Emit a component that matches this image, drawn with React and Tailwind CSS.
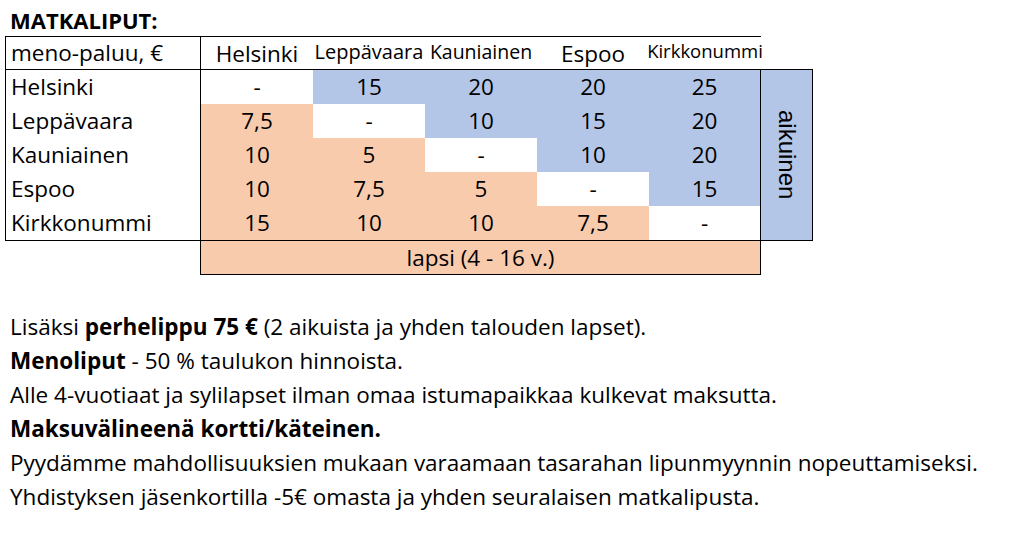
import React from 'react';

const cities = ['Helsinki', 'Leppävaara', 'Kauniainen', 'Espoo', 'Kirkkonummi'];

const prices = [
  ['-', '15', '20', '20', '25'],
  ['7,5', '-', '10', '15', '20'],
  ['10', '5', '-', '10', '20'],
  ['10', '7,5', '5', '-', '15'],
  ['15', '10', '10', '7,5', '-'],
];

const cellColor = (row, col) => {
  if (row === col) return 'bg-white';
  if (col > row) return 'bg-[#b4c6e7]';
  return 'bg-[#f8cbad]';
};

const App = () => {
  return (
    <div className="w-[1012px] h-[533px] bg-white text-black font-['Open_Sans','Liberation_Sans',sans-serif] text-[22.5px]">
      {/* Title */}
      <div className="h-[36px] pl-[10px] pt-[6px] font-bold text-[22px] leading-[28px]">MATKALIPUT:</div>

      {/* Price table */}
      <div className="flex pl-[5px]">
        <div className="w-[756px]">
          {/* Header row */}
          <div className="flex h-[34px] border-t border-l border-b border-black">
            <div className="w-[195px] border-r border-black pl-[5px] leading-[32px] whitespace-nowrap">meno-paluu, €</div>
            <div className="w-[112px] text-center leading-[34px]">Helsinki</div>
            <div className="w-[112px] text-center text-[20px] leading-[30px] whitespace-nowrap">Leppävaara</div>
            <div className="w-[112px] text-center text-[19.5px] leading-[30px] whitespace-nowrap">Kauniainen</div>
            <div className="w-[112px] text-center leading-[34px]">Espoo</div>
            <div className="w-[112px] flex justify-center text-[18.5px] leading-[28px] whitespace-nowrap">Kirkkonummi</div>
          </div>

          {/* Body rows */}
          <div className="border-l border-r border-b border-black">
            {cities.map((city, row) => (
              <div key={city} className="flex h-[34px]">
                <div className="w-[195px] border-r border-black pl-[5px] leading-[34px]">{city}</div>
                {prices[row].map((value, col) => (
                  <div
                    key={col}
                    className={`${col === 4 ? 'w-[111px]' : 'w-[112px]'} ${cellColor(row, col)} text-center leading-[34px]`}
                  >
                    {value}
                  </div>
                ))}
              </div>
            ))}
          </div>
        </div>

        {/* Adult label */}
        <div className="mt-[33px] w-[52px] h-[172px] border-t border-r border-b border-black bg-[#b4c6e7] flex items-center justify-center">
          <span className="[writing-mode:vertical-rl] font-['Liberation_Sans',sans-serif] text-[24px] leading-none">aikuinen</span>
        </div>
      </div>

      {/* Child label */}
      <div className="ml-[200px] w-[561px] h-[34px] border-l border-r border-b border-black bg-[#f8cbad] text-center leading-[33px]">
        lapsi (4 - 16 v.)
      </div>

      {/* Notes */}
      <div className="mt-[35px] pl-[10px] leading-[34px] whitespace-nowrap">
        <p>
          Lisäksi <b>perhelippu 75 €</b> (2 aikuista ja yhden talouden lapset).
        </p>
        <p>
          <b>Menoliput</b> - 50 % taulukon hinnoista.
        </p>
        <p>Alle 4-vuotiaat ja sylilapset ilman omaa istumapaikkaa kulkevat maksutta.</p>
        <p>
          <b>Maksuvälineenä kortti/käteinen.</b>
        </p>
        <p>Pyydämme mahdollisuuksien mukaan varaamaan tasarahan lipunmyynnin nopeuttamiseksi.</p>
        <p>Yhdistyksen jäsenkortilla -5€ omasta ja yhden seuralaisen matkalipusta.</p>
      </div>
    </div>
  );
};

export default App;
